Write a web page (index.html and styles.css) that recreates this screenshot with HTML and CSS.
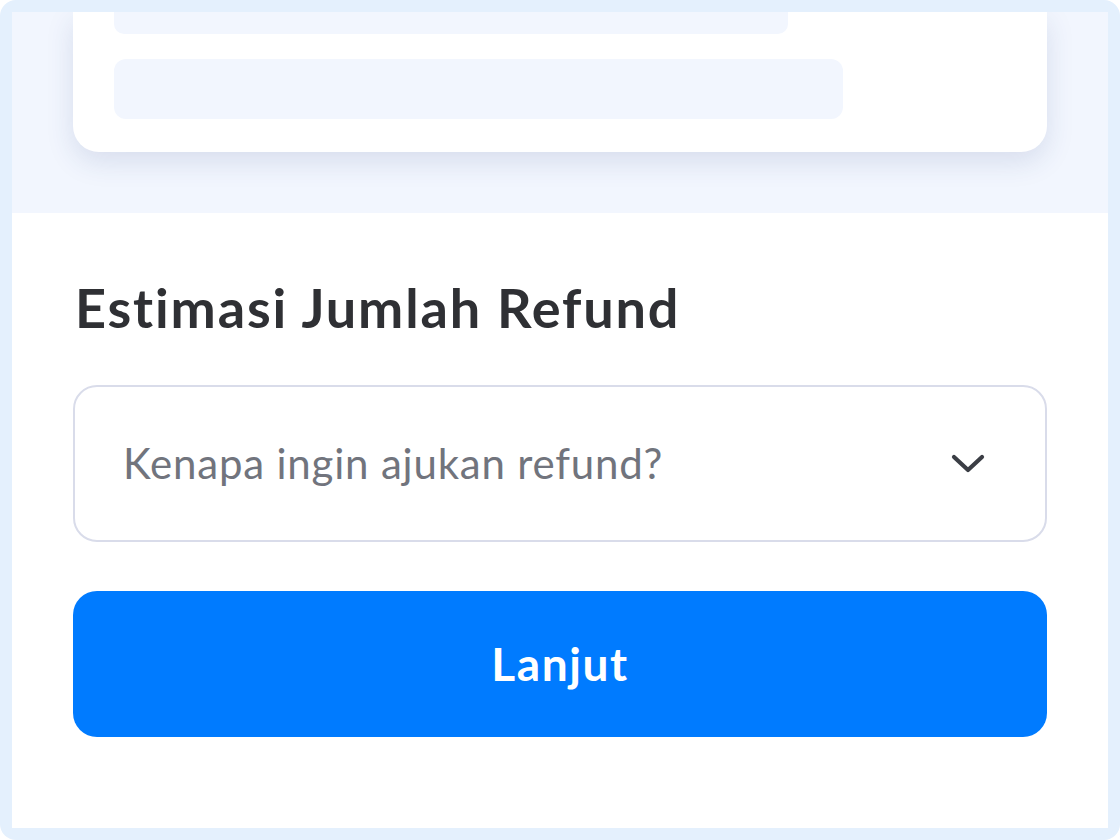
FILE: index.html
```html
<!DOCTYPE html>
<html lang="id">
<head>
<meta charset="utf-8">
<title>Refund</title>
<link rel="stylesheet" href="styles.css">
</head>
<body>
<div class="frame">
  <div class="screen">
    <div class="top">
      <div class="card">
        <div class="bar bar-1"></div>
        <div class="bar bar-2"></div>
      </div>
    </div>
    <div class="content">
      <h1 class="title">Estimasi Jumlah Refund</h1>
      <div class="select">
        <span class="placeholder">Kenapa ingin ajukan refund?</span>
        <svg class="chevron" width="34" height="20" viewBox="0 0 34 20" aria-hidden="true">
          <path d="M3 3 L17 16 L31 3" fill="none" stroke="#3b3e45" stroke-width="4.2" stroke-linecap="round" stroke-linejoin="round"/>
        </svg>
      </div>
      <button class="btn" type="button">Lanjut</button>
    </div>
  </div>
</div>
</body>
</html>
```

FILE: styles.css
```css
* { box-sizing: border-box; }

html, body {
  margin: 0;
  padding: 0;
  background: #ffffff;
}

body {
  font-family: Lato, "Noto Sans", sans-serif;
  font-variant-ligatures: none;
}

.frame {
  width: 1120px;
  height: 840px;
  background: #e4f0fd;
  border-radius: 16px;
  padding: 12px;
}

.screen {
  height: 816px;
  background: #ffffff;
  overflow: hidden;
  display: flex;
  flex-direction: column;
}

.top {
  height: 201px;
  background: #f2f6fe;
  padding: 0 61px;
  flex: none;
}

.card {
  background: #ffffff;
  border-radius: 0 0 26px 26px;
  box-shadow: 0 10px 28px rgba(40, 60, 120, 0.13);
  padding: 0 41px 33px;
  display: flex;
  flex-direction: column;
  gap: 25px;
}

.bar {
  background: #f2f6fe;
}

.bar-1 {
  width: 674px;
  height: 22px;
  border-radius: 0 0 10px 10px;
}

.bar-2 {
  width: 729px;
  height: 60px;
  border-radius: 12px;
}

.content {
  flex: 1;
  padding: 63px 61px 0;
  display: flex;
  flex-direction: column;
}

.title {
  margin: 0 0 44px 2px;
  font-size: 54px;
  line-height: 1.2;
  font-weight: 700;
  letter-spacing: 1.85px;
  color: #2f3034;
}

.select {
  height: 157px;
  border: 2px solid #d9dcea;
  border-radius: 24px;
  display: flex;
  align-items: center;
  justify-content: space-between;
  padding: 0 60px 0 48px;
}

.placeholder {
  font-size: 42px;
  line-height: 1.2;
  letter-spacing: 0.8px;
  color: #71747d;
}

.chevron {
  display: block;
  margin-top: 2px;
}

.btn {
  margin-top: 49px;
  height: 146px;
  border: none;
  border-radius: 24px;
  background: #007bff;
  color: #ffffff;
  font-family: Lato, "Noto Sans", sans-serif;
  font-variant-ligatures: none;
  font-size: 46px;
  font-weight: 700;
  letter-spacing: 1.6px;
  cursor: pointer;
}
```
